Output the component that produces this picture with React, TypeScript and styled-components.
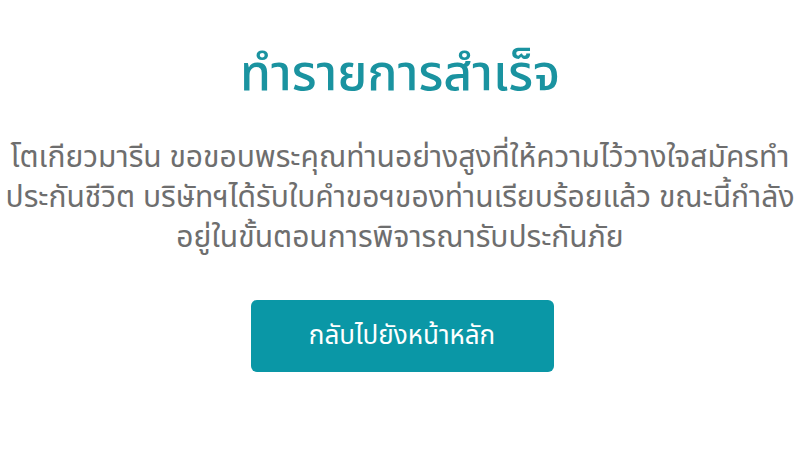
import React from "react";
import styled, { createGlobalStyle } from "styled-components";

const GlobalStyle = createGlobalStyle`
  html, body {
    margin: 0;
    padding: 0;
    background: #fff;
  }
  body {
    font-family: "Noto Sans Thai", "Noto Sans", "DejaVu Sans", sans-serif;
  }
`;

const lines = [
  "โตเกียวมารีน ขอขอบพระคุณท่านอย่างสูงที่ให้ความไว้วางใจสมัครทำ",
  "ประกันชีวิต บริษัทฯได้รับใบคำขอฯของท่านเรียบร้อยแล้ว ขณะนี้กำลัง",
  "อยู่ในขั้นตอนการพิจารณารับประกันภัย",
];

const App: React.FC = () => {
  return (
    <>
      <GlobalStyle />
      <Main>
        <Title>ทำรายการสำเร็จ</Title>
        <Message>
          {lines.map((l) => (
            <Line key={l}>{l}</Line>
          ))}
        </Message>
        <HomeButton>กลับไปยังหน้าหลัก</HomeButton>
      </Main>
    </>
  );
};

export default App;

const Main = styled.div`
  width: 100%;
  display: flex;
  flex-direction: column;
  align-items: center;
  padding-top: 45px;
  box-sizing: border-box;
`;

const Title = styled.h1`
  margin: 0;
  font-size: 50px;
  font-weight: 500;
  line-height: 60px;
  color: #1a93a0;
`;

const Message = styled.div`
  margin-top: 33px;
  color: #6e6e6e;
  text-align: center;
`;

const Line = styled.p`
  margin: 0;
  font-size: 30px;
  line-height: 40px;
  white-space: nowrap;
`;

const HomeButton = styled.button`
  margin: 42px 0 0 4px;
  width: 303px;
  height: 72px;
  border: none;
  border-radius: 6px;
  background-color: #0a97a6;
  color: #fff;
  font-family: inherit;
  font-size: 26px;
  cursor: pointer;
`;
